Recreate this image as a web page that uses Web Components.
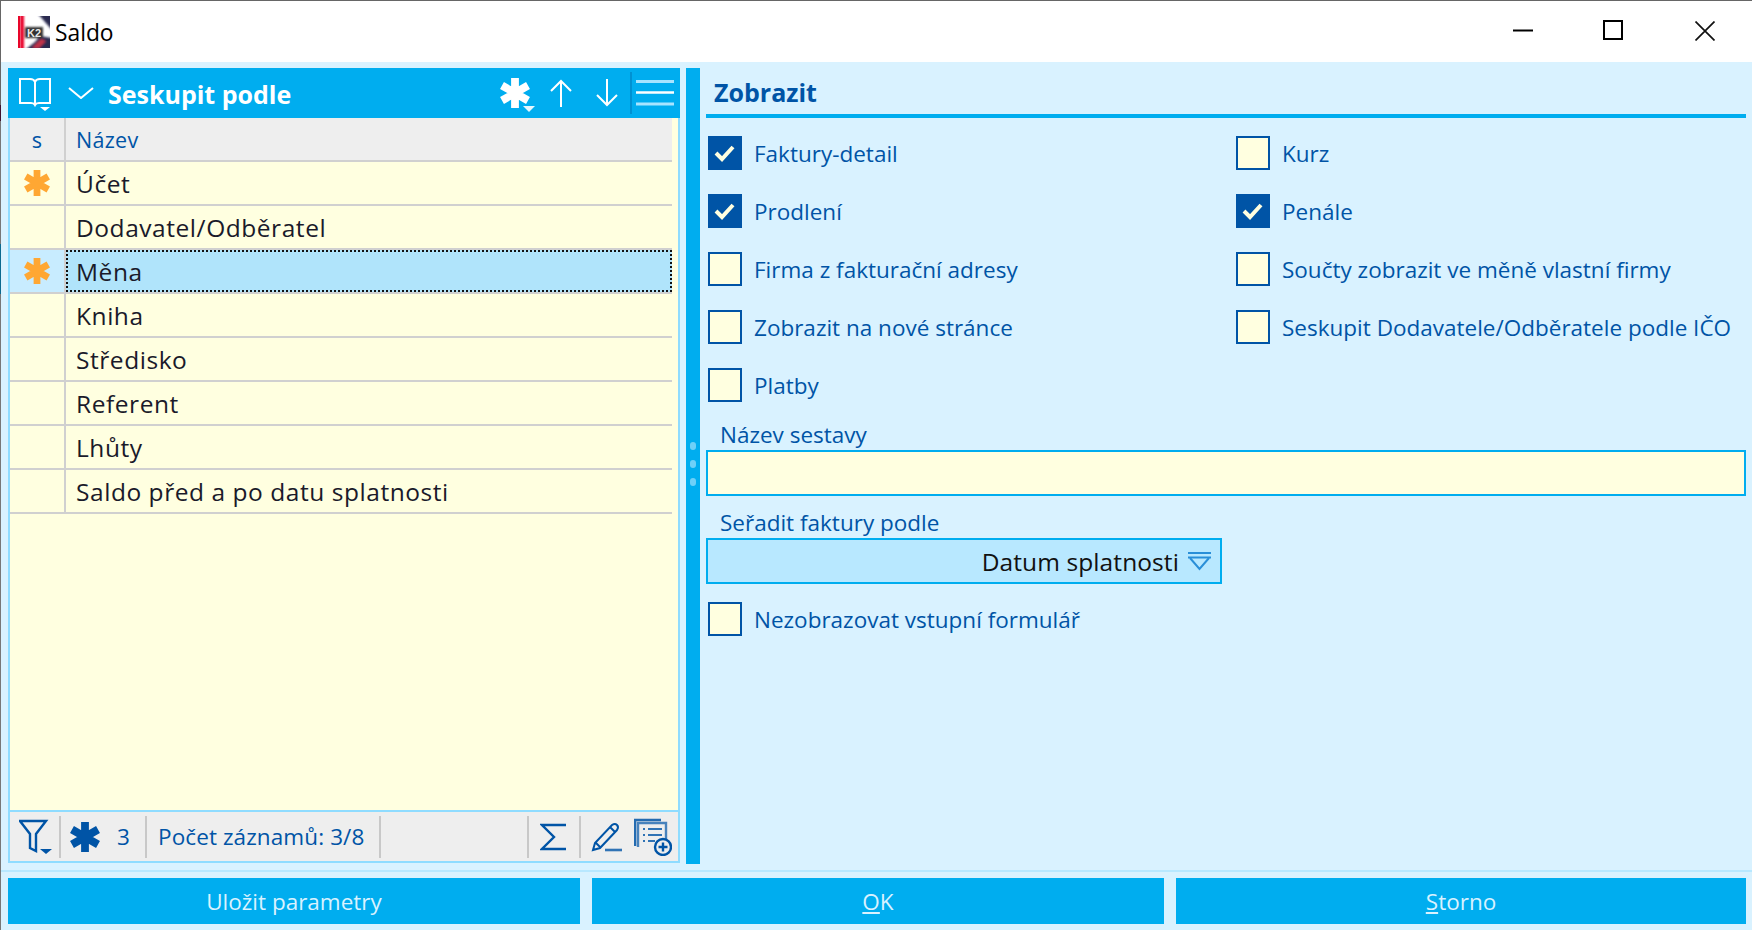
<!DOCTYPE html>
<html>
<head>
<meta charset="utf-8">
<title>Saldo</title>
<style>
html, body { margin: 0; height: 100%; overflow: hidden; background: #d9f2ff; }
body { font-family: "Open Sans", "Noto Sans", "Liberation Sans", sans-serif; font-size: 22.5px; }
</style>
</head>
<body>
<k2-window></k2-window>
<script>
const BLUE = '#00adef', DARK = '#0054a6';

const star = (color, size) => `<svg width="${size}" height="${size}" viewBox="0 0 30 30" style="display:block">
  <g stroke="${color}" stroke-width="7.8"><path d="M15 0v30M2 7.5l26 15M2 22.5l26-15"/></g></svg>`;

class K2Titlebar extends HTMLElement {
    constructor() {
        super();
        this.attachShadow({mode: 'open'});
        this.shadowRoot.innerHTML = `
      <style>
    :host { display: flex; align-items: center; height: 61px; background: #fff; border-top: 1px solid #666; color: #000; padding-left: 17px; font-size: 22.8px; flex: none; }
    .logo { width: 32px; height: 32px; margin-right: 5px; }
    .name { flex: 1; padding-top: 1px; }
    .ctl { width: 20px; height: 20px; margin-right: 70px; display: block; position: relative; top: -1px; }
    .ctl.mid { margin-right: 72px; top: -2px; }
    .ctl.last { margin-right: 37px; }
      </style>
      <svg class="logo" viewBox="0 0 32 32">
    <defs><filter id="soft"><feGaussianBlur stdDeviation="0.9"/></filter></defs>
    <rect width="32" height="32" fill="#fff"/>
    <g filter="url(#soft)">
      <path d="M20 -2h14v16zM7 34l10-8 5-6 12 2v12z" fill="#2c2c50"/>
      <path d="M14 32l9-9 5 2-7 7z" fill="#c23048"/>
      <path d="M2 -2h4v36H2z" fill="#e8062a"/>
      <rect x="7" y="11" width="18" height="11" fill="#333"/>
    </g>
    <text x="16" y="21" text-anchor="middle" font-family="Liberation Sans, sans-serif" font-weight="700" font-size="11" fill="#e8e8e8">K2</text>
    <path d="M0 0h2v32H0z" fill="#e8062a"/>
      </svg>
      <span class="name"><slot></slot></span>
      <svg class="ctl" viewBox="0 0 20 20"><path d="M0 9.5h20" stroke="#000" stroke-width="2"/></svg>
      <svg class="ctl mid" viewBox="0 0 20 20"><rect x="1" y="1" width="18" height="18" fill="none" stroke="#000" stroke-width="2"/></svg>
      <svg class="ctl last" viewBox="0 0 20 20"><path d="M0.5 .5l19 19M19.5 .5l-19 19" stroke="#111" stroke-width="1.7"/></svg>
  `;
    }
}

class K2GridRow extends HTMLElement {
    constructor() {
        super();
        this.attachShadow({mode: 'open'});
        const marked = this.hasAttribute('marked');
        this.shadowRoot.innerHTML = `
      <style>
    :host { display: flex; height: 44px; box-sizing: border-box; border-bottom: 2px solid #d0d0d0; margin-right: 6px; color: #1a1a2a; font-size: 24.5px; letter-spacing: .55px; white-space: nowrap; }
    :host([head]) { background: #eee; color: ${DARK}; font-size: 21.5px; letter-spacing: .3px; }
    .s { width: 54px; flex: none; border-right: 2px solid #d0d0d0; display: flex; align-items: center; justify-content: center; }
    .n { flex: 1; padding-left: 10px; display: flex; align-items: center; min-width: 0; }
    :host([selected]) .s { background: #c8ecff; }
    :host([selected]) .n { background: #b0e4fb; outline: 2px dotted #111; outline-offset: -2px; }
      </style>
      <div class="s">${marked ? star('#ffa733', 26) : ''}<slot name="s"></slot></div>
      <div class="n"><slot></slot></div>
  `;
    }
}

class K2GroupPanel extends HTMLElement {
    constructor() {
        super();
        this.attachShadow({mode: 'open'});
        this.shadowRoot.innerHTML = `
      <style>
    :host { display: flex; flex-direction: column; width: 672px; flex: none; }
    header { height: 50px; flex: none; background: ${BLUE}; color: #fff; display: flex; align-items: center; position: relative; font-weight: 700; font-size: 25px; }
    header svg { display: block; flex: none; }
    .title { margin-left: 14px; flex: 1; padding-top: 1px; }
    .body { flex: 1; background: #ffffe0; border-left: 2px solid #8fdcff; border-right: 2px solid #8fdcff; }
    footer { height: 53px; margin-bottom: 1px; flex: none; box-sizing: border-box; background: #eee; border: 2px solid #8fdcff; display: flex; align-items: center; color: ${DARK}; font-size: 22.5px; }
    .sep { width: 2px; height: 42px; background: #c8c8c8; flex: none; }
    footer svg { display: block; flex: none; }
      </style>
      <header>
    <svg style="margin-left:10px" width="34" height="36" viewBox="0 0 34 36" fill="none" stroke="#fff" stroke-width="2">
      <path d="M2 4h10q4 0 5 3q1-3 5-3h10v24H21q-3 0-4 2q-1-2-4-2H2zM17 7v23"/>
      <path d="M22 32h10l-5 4z" fill="#fff" stroke="none"/>
    </svg>
    <svg style="margin-left:16px" width="26" height="12" viewBox="0 0 26 12" fill="none" stroke="#fff" stroke-width="2"><path d="M1 1l12 10L25 1"/></svg>
    <span class="title">Seskupit podle</span>
    <span style="display:block;width:36px;flex:none;position:relative;margin-right:14px">
      ${star('#fff', 30)}
      <svg style="position:absolute;left:23px;top:28px" width="12" height="6" viewBox="0 0 12 6"><path d="M0 0h12L6 6z" fill="#fff" opacity=".9"/></svg>
    </span>
    <svg style="margin-right:24px" width="22" height="28" viewBox="0 0 22 28" fill="none" stroke="#fff" stroke-width="2"><path d="M11 28V2M1 12L11 2l10 10"/></svg>
    <svg style="margin-right:12px" width="22" height="28" viewBox="0 0 22 28" fill="none" stroke="#fff" stroke-width="2"><path d="M11 0v26M1 16l10 10 10-10"/></svg>
    <span style="display:block;width:2px;height:42px;background:#0091d2;flex:none"></span>
    <svg style="margin:0 6px 0 4px" width="38" height="26" viewBox="0 0 38 26"><path d="M0 1.5h38" stroke="#a8e4ff" stroke-width="3"/><path d="M0 12.5h38" stroke="#fff" stroke-width="2.4"/><path d="M0 24h38" stroke="#a8e4ff" stroke-width="3"/></svg>
      </header>
      <div class="body"><slot></slot></div>
      <footer>
    <svg style="margin-left:9px" width="34" height="40" viewBox="0 0 34 40" fill="none" stroke="${DARK}" stroke-width="2.4"><path d="M1 4h26L17 17v17l-6-3V17z"/><path d="M21 32h12l-6 5z" fill="${DARK}" stroke="none"/></svg>
    <span class="sep" style="margin-left:6px"></span>
    <span style="margin-left:9px">${star(DARK, 30)}</span>
    <span style="margin-left:17px;width:28px">3</span>
    <span class="sep"></span>
    <span style="margin-left:11px;flex:1;letter-spacing:.1px">Počet záznamů: 3/8</span>
    <span class="sep"></span>
    <span style="width:146px"></span>
    <span class="sep"></span>
    <svg style="margin-left:11px" width="26" height="28" viewBox="0 0 26 28" fill="none" stroke="${DARK}" stroke-width="2.4"><path d="M26 2H2l12 12L2 26h24"/></svg>
    <span class="sep" style="margin-left:13px"></span>
    <svg style="margin-left:10px" width="32" height="32" viewBox="0 0 32 32" fill="none" stroke="${DARK}" stroke-width="2"><path d="M2 29l2-7L21 4q3-2 5 0t0 5L9 27zM5 22l5 5M19 6l5 5"/><path d="M14 29h17" stroke-width="2.6" opacity=".8"/></svg>
    <svg style="margin:0 6px 0 11px" width="38" height="38" viewBox="0 0 38 38" fill="none" stroke="${DARK}">
      <path d="M1 28V2h26" stroke-width="2.6" opacity=".85"/>
      <path d="M4 29V5h28v19" stroke-width="2.4" opacity=".7"/>
      <path d="M9 11h2M14 11h14M9 17h2M14 17h14M9 23h2M14 23h7" stroke-width="2" opacity=".8"/>
      <circle cx="29" cy="29" r="8" fill="#eee" stroke-width="2.4"/>
      <path d="M24.5 29h9M29 24.5v9" stroke-width="2.4"/>
    </svg>
      </footer>
  `;
    }
}

class K2Check extends HTMLElement {
    constructor() {
        super();
        this.attachShadow({mode: 'open'});
        const on = this.hasAttribute('checked');
        this.shadowRoot.innerHTML = `
      <style>
    :host { display: flex; align-items: center; height: 34px; color: ${DARK}; white-space: nowrap; }
    .box { width: 34px; height: 34px; box-sizing: border-box; flex: none; border: 2px solid ${DARK}; background: ${on ? DARK : '#ffffe0'}; margin-right: 12px; }
    .box svg { display: block; }
      </style>
      <span class="box">${on ? '<svg width="30" height="30" viewBox="0 0 30 30"><path d="M6 15l6 6L23 9" fill="none" stroke="#ffffe0" stroke-width="4"/></svg>' : ''}</span>
      <slot></slot>
  `;
    }
}

class K2Field extends HTMLElement {
    constructor() {
        super();
        this.attachShadow({mode: 'open'});
        const select = this.hasAttribute('select');
        this.shadowRoot.innerHTML = `
      <style>
    :host { display: block; color: ${DARK}; }
    label { display: block; padding-left: 14px; line-height: 30px; }
    .box { height: 46px; box-sizing: border-box; border: 2px solid ${BLUE}; background: #ffffe0; }
    :host([select]) { width: 516px; }
    :host([select]) .box { background: #b8e8ff; color: #111; display: flex; align-items: center; justify-content: flex-end; padding-right: 9px; font-size: 24.5px; letter-spacing: .1px; }
    .box svg { display: block; margin-left: 9px; }
      </style>
      <label>${this.getAttribute('label')}</label>
      <div class="box"><slot></slot>${select ? `<svg width="23" height="20" viewBox="0 0 23 20" fill="none" stroke="#2a8fd8" stroke-width="2"><path d="M0 2h23M0 6.5h23" /><path d="M2 7l9.5 11L21 7" /></svg>` : ''}</div>
  `;
    }
}

class K2Button extends HTMLElement {
    constructor() {
        super();
        this.attachShadow({mode: 'open'});
        this.shadowRoot.innerHTML = `
      <style>
    :host { display: flex; align-items: center; justify-content: center; width: 572px; flex: none; height: 46px; background: ${BLUE}; color: #d9f2ff; }
    :host(:last-child) { width: auto; flex: 1; }
      </style>
      <slot></slot>
  `;
    }
}

class K2Window extends HTMLElement {
    constructor() {
        super();
        this.attachShadow({mode: 'open'});
        this.shadowRoot.innerHTML = `
      <style>
    :host { display: flex; flex-direction: column; height: 930px; background: #d9f2ff; box-sizing: border-box; border-left: 1px solid; border-image: linear-gradient(#666 0 106px, #40102e 106px 122px, #777 122px 244px, #0a6a90 244px 294px, #777 294px) 1; }
    u { text-decoration: underline; }
    .main { flex: 1; display: flex; padding: 6px 6px 0 7px; min-height: 0; }
    .split { width: 14px; flex: none; margin-left: 6px; background: ${BLUE}; display: flex; flex-direction: column; align-items: center; justify-content: center; gap: 10px; padding-bottom: 4px; box-sizing: border-box; }
    .split i { width: 6px; height: 8px; background: #6ed0f8; border-radius: 3px; margin-top: 0; }
    .right { flex: 1; margin-left: 6px; min-width: 0; }
    h2 { margin: 0; height: 46px; box-sizing: content-box; border-bottom: 4px solid ${BLUE}; color: ${DARK}; font-size: 25px; font-weight: 700; line-height: 48px; padding-left: 8px; }
    .checks { display: grid; grid-template-columns: 528px 1fr; row-gap: 24px; padding: 18px 0 0 2px; }
    .right k2-field:first-of-type { margin-top: 18px; }
    .right k2-field + k2-field { margin-top: 12px; }
    .last { margin: 18px 0 0 2px; }
    .rule { height: 2px; background: #b8e8ff; margin: 6px 0 6px 0; flex: none; }
    .buttons { display: flex; gap: 12px; padding: 0 6px 6px 7px; flex: none; }
      </style>
      <k2-titlebar>Saldo</k2-titlebar>
      <div class="main">
    <k2-group-panel>
      <k2-grid-row head><span slot="s">s</span>Název</k2-grid-row>
      <k2-grid-row marked>Účet</k2-grid-row>
      <k2-grid-row>Dodavatel/Odběratel</k2-grid-row>
      <k2-grid-row marked selected>Měna</k2-grid-row>
      <k2-grid-row>Kniha</k2-grid-row>
      <k2-grid-row>Středisko</k2-grid-row>
      <k2-grid-row>Referent</k2-grid-row>
      <k2-grid-row>Lhůty</k2-grid-row>
      <k2-grid-row>Saldo před a po datu splatnosti</k2-grid-row>
    </k2-group-panel>
    <div class="split"><i></i><i></i><i></i></div>
    <div class="right">
      <h2>Zobrazit</h2>
      <div class="checks">
        <k2-check checked>Faktury-detail</k2-check>
        <k2-check>Kurz</k2-check>
        <k2-check checked>Prodlení</k2-check>
        <k2-check checked>Penále</k2-check>
        <k2-check>Firma z fakturační adresy</k2-check>
        <k2-check>Součty zobrazit ve měně vlastní firmy</k2-check>
        <k2-check>Zobrazit na nové stránce</k2-check>
        <k2-check>Seskupit Dodavatele/Odběratele podle IČO</k2-check>
        <k2-check>Platby</k2-check>
      </div>
      <k2-field label="Název sestavy"></k2-field>
      <k2-field select label="Seřadit faktury podle">Datum splatnosti</k2-field>
      <k2-check class="last">Nezobrazovat vstupní formulář</k2-check>
    </div>
      </div>
      <div class="rule"></div>
      <div class="buttons">
    <k2-button>Uložit parametry</k2-button>
    <k2-button><u>O</u>K</k2-button>
    <k2-button><u>S</u>torno</k2-button>
      </div>
  `;
    }
}

customElements.define('k2-titlebar', K2Titlebar);
customElements.define('k2-grid-row', K2GridRow);
customElements.define('k2-group-panel', K2GroupPanel);
customElements.define('k2-check', K2Check);
customElements.define('k2-field', K2Field);
customElements.define('k2-button', K2Button);
customElements.define('k2-window', K2Window);
</script>
</body>
</html>
